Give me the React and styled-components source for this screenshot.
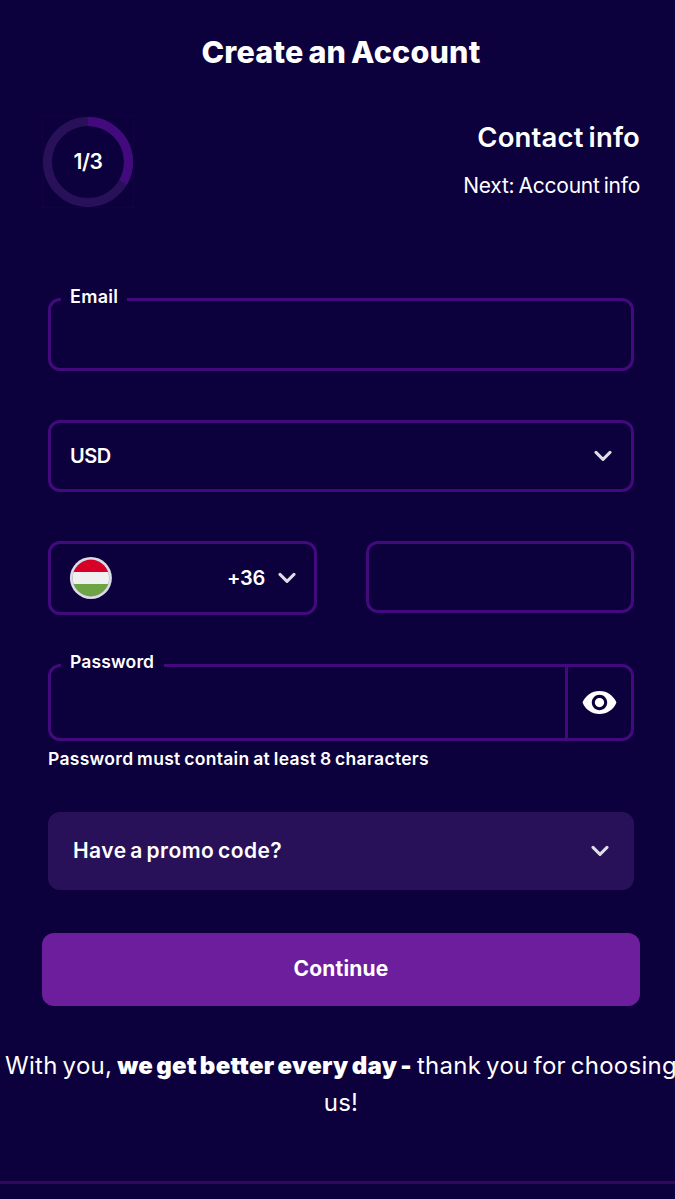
import React, { useState } from "react";
import styled, { createGlobalStyle } from "styled-components";

const colors = {
  page: "#0c003d",
  border: "#420a7d",
  panel: "#29115a",
  accent: "#6d1e9c",
  icon: "#dfdde6",
};

const GlobalStyle = createGlobalStyle`
  * {
    box-sizing: border-box;
  }

  body {
    margin: 0;
    background-color: ${colors.page};
    color: #ffffff;
    font-family: Inter, "Liberation Sans", sans-serif;
    overflow: hidden;
  }
`;

const Page = styled.div`
  width: 675px;
  height: 1199px;
  overflow: hidden;
  background-color: ${colors.page};
`;

const Container = styled.main`
  width: 598px;
  margin-left: 42px;
`;

const Title = styled.h1`
  margin: 0;
  padding-top: 32px;
  height: 116px;
  font-size: 30.5px;
  line-height: 40px;
  font-weight: 800;
  letter-spacing: 0.2px;
  word-spacing: -2px;
  text-align: center;
  white-space: nowrap;
`;

const StepHeader = styled.header`
  display: flex;
  justify-content: space-between;
  height: 182px;
`;

const Ring = styled.div`
  display: grid;
  place-items: center;
  width: 92px;
  height: 92px;
  border: 1px solid #11033f;

  > * {
    grid-area: 1 / 1;
  }
`;

const RingLabel = styled.span`
  padding-bottom: 2px;
  font-size: 21px;
  font-weight: 600;
  letter-spacing: -0.4px;
`;

const StepText = styled.div`
  text-align: right;
  white-space: nowrap;
`;

const StepName = styled.h2`
  margin: 0;
  padding-top: 1px;
  font-size: 27.5px;
  line-height: 40px;
  font-weight: 600;
  letter-spacing: 0.15px;
  word-spacing: -2px;
`;

const NextStep = styled.p`
  margin: 13px 0 0;
  font-size: 21px;
  line-height: 32px;
  letter-spacing: -0.25px;
  word-spacing: -1.5px;
`;

const Form = styled.form`
  display: flex;
  flex-direction: column;
  padding: 0 6px;
`;

const Field = styled.div`
  position: relative;
  display: flex;
  align-items: center;
  width: ${({ $width }) => $width || "auto"};
  height: ${({ $height }) => $height}px;
  margin-bottom: ${({ $gap }) => $gap || 0}px;
  border: 3px solid ${colors.border};
  border-radius: 12px;
`;

const FieldLabel = styled.label`
  position: absolute;
  top: ${({ $top }) => $top}px;
  left: 10px;
  width: ${({ $width }) => $width}px;
  padding-left: 9px;
  background-color: ${colors.page};
  font-size: ${({ $size }) => $size}px;
  line-height: 22px;
  font-weight: 600;
  letter-spacing: ${({ $spacing }) => $spacing}px;
  white-space: nowrap;
`;

const Input = styled.input`
  flex: 1;
  min-width: 0;
  height: 100%;
  padding: 0 19px;
  border: 0;
  outline: 0;
  background: transparent;
  color: inherit;
  font: inherit;
  font-size: 20px;
`;

const Select = styled.button`
  display: flex;
  flex: 1;
  align-items: center;
  height: 100%;
  padding: 0 ${({ $end }) => $end || 18}px 0 ${({ $start }) => $start || 19}px;
  border: 0;
  background: transparent;
  color: inherit;
  font: inherit;
  font-size: 20px;
  font-weight: 600;
`;

const SelectValue = styled.span`
  margin-left: ${({ $end }) => ($end ? "auto" : 0)};
  margin-right: ${({ $end }) => ($end ? "13px" : "auto")};
  padding-bottom: 1px;
  letter-spacing: ${({ $spacing }) => $spacing}px;
`;

const PhoneRow = styled.div`
  display: flex;
  justify-content: space-between;
  align-items: flex-start;
  height: 123px;
`;

const EyeButton = styled.button`
  display: flex;
  align-items: center;
  justify-content: center;
  width: 66px;
  height: 100%;
  padding: 0 1px 0 0;
  border: 0;
  border-left: 3px solid ${colors.border};
  background: transparent;
`;

const Hint = styled.p`
  height: 71px;
  margin: 0;
  padding-top: 7px;
  font-size: 17.5px;
  line-height: 22px;
  font-weight: 600;
  letter-spacing: 0.3px;
  word-spacing: -1px;
  white-space: nowrap;
`;

const Promo = styled.button`
  display: flex;
  align-items: center;
  justify-content: space-between;
  height: 78px;
  padding: 0 25px;
  border: 0;
  border-radius: 12px;
  background-color: ${colors.panel};
  color: inherit;
  font: inherit;
  font-size: 21px;
  font-weight: 600;
  letter-spacing: 0.45px;
  word-spacing: -2px;
`;

const PromoText = styled.span`
  padding-bottom: 2px;
`;

const Continue = styled.button`
  height: 73px;
  margin: 43px -6px 0;
  padding: 0 0 2px;
  border: 0;
  border-radius: 12px;
  background-color: ${colors.accent};
  color: inherit;
  font: inherit;
  font-size: 21px;
  font-weight: 700;
  letter-spacing: 0.2px;
`;

const Footer = styled.footer`
  width: 682px;
  height: 137px;
  margin-top: 41px;
  border-bottom: 3px solid #32085f;
  font-size: 24px;
  line-height: 37px;
  letter-spacing: 0.25px;
  word-spacing: -2px;
  text-align: center;
  white-space: nowrap;

  strong {
    font-weight: 900;
    letter-spacing: 0.3px;
  }
`;

const Chevron = () => (
  <svg width="18" height="12" viewBox="0 0 18 12" fill="none">
    <path
      d="M2 2.4L9 9.4L16 2.4"
      stroke={colors.icon}
      strokeWidth="3"
      strokeLinecap="round"
      strokeLinejoin="round"
    />
  </svg>
);

const HungaryFlag = () => (
  <svg width="43" height="43" viewBox="0 0 43 43">
    <clipPath id="flagCircle">
      <circle cx="21.9" cy="21" r="18.2" />
    </clipPath>
    <circle cx="21.9" cy="21" r="21" fill="#dcdbe6" />
    <circle cx="21.9" cy="21" r="18.4" fill="#9a93b8" />
    <g clipPath="url(#flagCircle)">
      <rect y="2" width="43" height="13" fill="#d80027" />
      <rect x="3.5" y="15" width="37" height="12" fill="#f0f0f0" />
      <rect y="27" width="43" height="13" fill="#6da544" />
    </g>
  </svg>
);

const EyeIcon = () => (
  <svg width="37" height="37" viewBox="0 0 24 24" fill="#ffffff">
    <path d="M12 4.5C7 4.5 2.73 7.61 1 12c1.73 4.39 6 7.5 11 7.5s9.27-3.11 11-7.5c-1.73-4.39-6-7.5-11-7.5zM12 17c-2.76 0-5-2.24-5-5s2.24-5 5-5 5 2.24 5 5-2.24 5-5 5zm0-8c-1.66 0-3 1.34-3 3s1.34 3 3 3 3-1.34 3-3-1.34-3-3-3z" />
  </svg>
);

const StepRing = ({ step, total }) => (
  <Ring>
    <svg width="90" height="90" viewBox="0 0 90 90" fill="none">
      <circle cx="45" cy="45" r="40.5" stroke={colors.panel} strokeWidth="9" />
      <circle
        cx="45"
        cy="45"
        r="40.5"
        stroke={colors.border}
        strokeWidth="9"
        pathLength={total}
        strokeDasharray={`${step} ${total - step}`}
        transform="rotate(-90 45 45)"
      />
    </svg>
    <RingLabel>
      {step}/{total}
    </RingLabel>
  </Ring>
);

const App = () => {
  const [visible, setVisible] = useState(false);

  return (
    <Page>
      <GlobalStyle />
      <Container>
        <Title>Create an Account</Title>
        <StepHeader>
          <StepRing step={1} total={3} />
          <StepText>
            <StepName>Contact info</StepName>
            <NextStep>Next: Account info</NextStep>
          </StepText>
        </StepHeader>
        <Form onSubmit={(e) => e.preventDefault()}>
          <Field $height={73} $gap={49}>
            <FieldLabel
              htmlFor="email"
              $top={-15}
              $width={66}
              $size={18}
              $spacing={0.3}
            >
              Email
            </FieldLabel>
            <Input id="email" type="email" />
          </Field>
          <Field $height={72} $gap={49}>
            <Select type="button" $end={19}>
              <SelectValue $spacing={-0.5}>USD</SelectValue>
              <Chevron />
            </Select>
          </Field>
          <PhoneRow>
            <Field $width="269px" $height={74}>
              <Select type="button" $start={18}>
                <HungaryFlag />
                <SelectValue $end $spacing={-0.3}>
                  +36
                </SelectValue>
                <Chevron />
              </Select>
            </Field>
            <Field $width="268px" $height={72}>
              <Input type="tel" />
            </Field>
          </PhoneRow>
          <Field $height={77}>
            <FieldLabel
              htmlFor="password"
              $top={-16}
              $width={103}
              $size={17.5}
              $spacing={0.15}
            >
              Password
            </FieldLabel>
            <Input id="password" type={visible ? "text" : "password"} />
            <EyeButton type="button" onClick={() => setVisible(!visible)}>
              <EyeIcon />
            </EyeButton>
          </Field>
          <Hint>Password must contain at least 8 characters</Hint>
          <Promo type="button">
            <PromoText>Have a promo code?</PromoText>
            <Chevron />
          </Promo>
          <Continue type="submit">Continue</Continue>
        </Form>
      </Container>
      <Footer>
        With you, <strong>we get better every day -</strong> thank you for
        choosing
        <br />
        us!
      </Footer>
    </Page>
  );
};

export default App;
